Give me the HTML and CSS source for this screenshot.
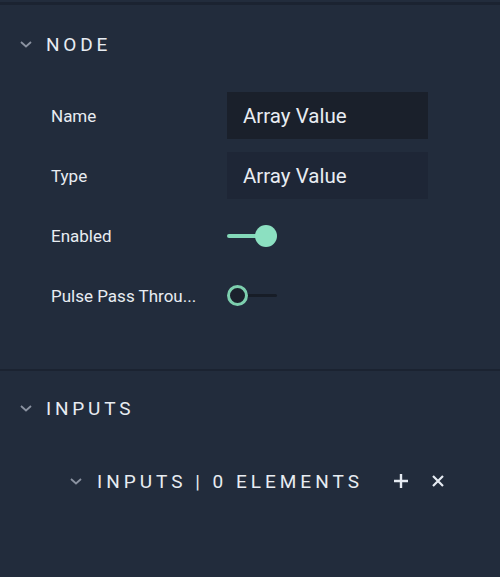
FILE: index.html
```html
<!DOCTYPE html>
<html>
<head>
<meta charset="utf-8">
<link rel="stylesheet" href="styles.css">
</head>
<body>
<div class="panel">
  <section class="section node">
    <div class="sec-head">
      <svg class="chev" width="14" height="10" viewBox="0 0 14 10"><path d="M2 3 L7 7.5 L12 3" fill="none" stroke="#8b93a1" stroke-width="1.8"/></svg>
      <span class="sec-title">NODE</span>
    </div>
    <div class="rows">
      <div class="row">
        <span class="label">Name</span>
        <div class="field active">Array Value</div>
      </div>
      <div class="row">
        <span class="label">Type</span>
        <div class="field">Array Value</div>
      </div>
      <div class="row toggle-row">
        <span class="label">Enabled</span>
        <div class="toggle on"><span class="track"></span><span class="thumb"></span></div>
      </div>
      <div class="row toggle-row">
        <span class="label">Pulse Pass Throu...</span>
        <div class="toggle off"><span class="track"></span><span class="thumb"></span></div>
      </div>
    </div>
  </section>
  <section class="section inputs">
    <div class="sec-head">
      <svg class="chev" width="14" height="10" viewBox="0 0 14 10"><path d="M2 3 L7 7.5 L12 3" fill="none" stroke="#8b93a1" stroke-width="1.8"/></svg>
      <span class="sec-title">INPUTS</span>
    </div>
    <div class="list-head">
      <svg class="chev" width="14" height="10" viewBox="0 0 14 10"><path d="M2 3 L7 7.5 L12 3" fill="none" stroke="#8b93a1" stroke-width="1.8"/></svg>
      <span class="list-title">INPUTS | 0 ELEMENTS</span>
      <svg class="icon plus" width="16" height="16" viewBox="0 0 16 16"><path d="M8 1 V15 M1 8 H15" stroke="#e6ebf2" stroke-width="2.4"/></svg>
      <svg class="icon close" width="14" height="14" viewBox="0 0 14 14"><path d="M2 2 L12 12 M12 2 L2 12" stroke="#e6ebf2" stroke-width="2.2"/></svg>
    </div>
  </section>
</div>
</body>
</html>
```

FILE: styles.css
```css
html, body {
  margin: 0;
  padding: 0;
  background: #222c3c;
  width: 500px;
  height: 577px;
  overflow: hidden;
}
.panel {
  font-family: Roboto, "Noto Sans", sans-serif;
  color: #e8ecf2;
  border-top: 3px solid #1b2331;
  margin-top: 2px;
}
.section.node {
  padding-bottom: 50px;
  border-bottom: 2px solid #1b2331;
}
.sec-head {
  display: flex;
  align-items: center;
  height: 26px;
  padding-left: 19px;
  margin-top: 26px;
}
.chev { display: block; }
.sec-title {
  margin-left: 13px;
  font-size: 19px;
  letter-spacing: 3.8px;
  font-weight: 400;
}
.rows {
  margin-top: 35px;
  display: flex;
  flex-direction: column;
  gap: 13px;
}
.row {
  display: flex;
  align-items: center;
  padding-left: 51px;
  height: 47px;
}
.label {
  width: 176px;
  font-size: 17px;
  white-space: nowrap;
}
.field {
  width: 201px;
  height: 47px;
  box-sizing: border-box;
  padding-left: 16px;
  display: flex;
  align-items: center;
  font-size: 20.5px;
  background: #1e2636;
}
.field.active { background: #1a202b; }
.toggle {
  position: relative;
  width: 50px;
  height: 24px;
}
.toggle .track {
  position: absolute;
  left: 0;
  top: 10px;
  height: 4px;
  border-radius: 2px;
}
.toggle .thumb {
  position: absolute;
  border-radius: 50%;
  box-sizing: border-box;
}
.toggle.on .track { width: 40px; background: #83d8b8; }
.toggle.on .thumb {
  width: 22px; height: 22px;
  left: 28px; top: 1px;
  background: #8ce0c1;
}
.toggle.off .track { width: 50px; background: #171d27; top: 10.5px; height: 3px; }
.toggle.off .thumb {
  width: 21px; height: 21px;
  left: 0; top: 1.5px;
  background: #1b212c;
  border: 3px solid #7dcfae;
}
.section.inputs .sec-head { margin-top: 24px; }
.list-head {
  display: flex;
  align-items: center;
  margin-top: 48px;
  padding-left: 69px;
  height: 24px;
}
.list-title {
  margin-left: 14px;
  font-size: 19px;
  letter-spacing: 4px;
}
.icon.plus { margin-left: 30px; }
.icon.close { margin-left: 22px; }
```
